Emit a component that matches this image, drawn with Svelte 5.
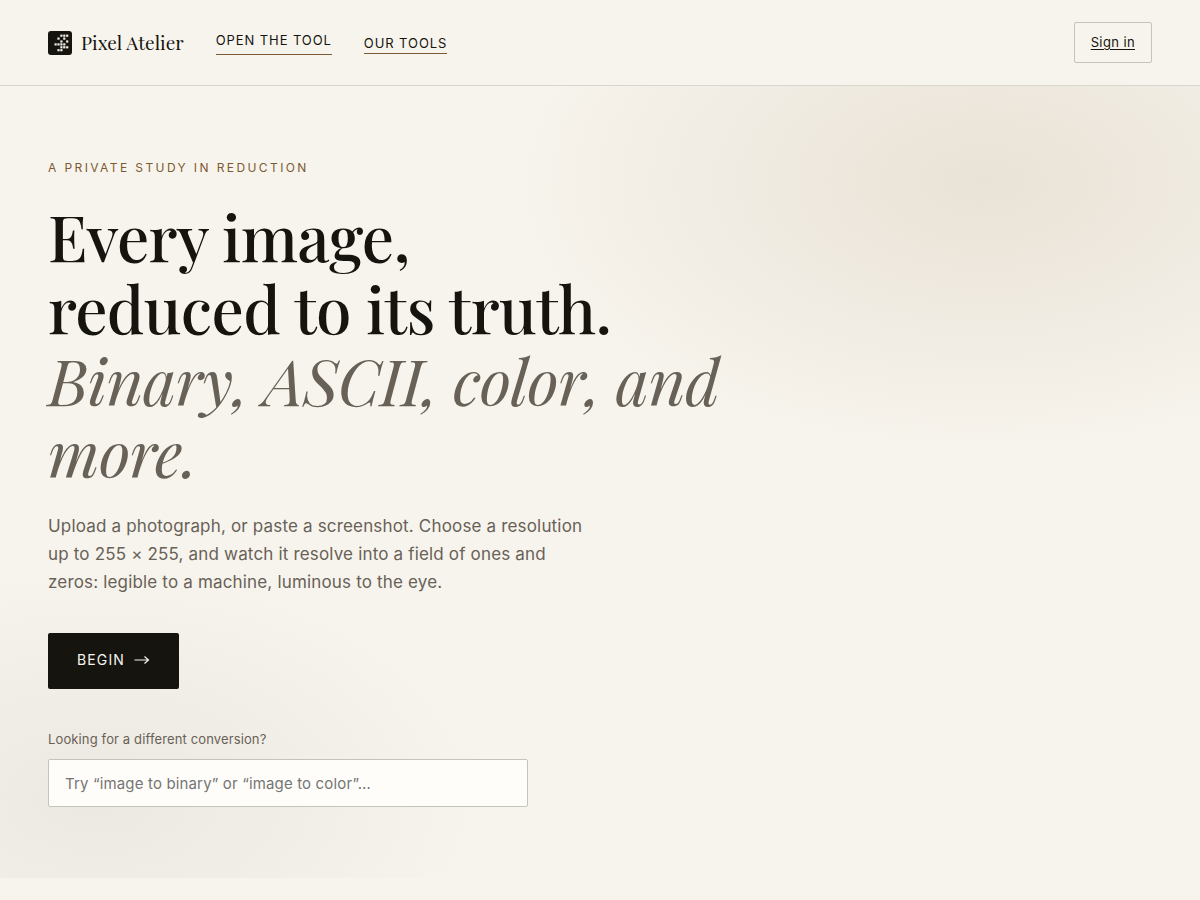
<script>
  let query = $state('');

  const pixels = [
    [5, 2], [6, 2], [7, 2],
    [4, 3], [6, 3],
    [5, 4], [7, 4],
    [3, 5], [4, 5], [5, 5], [6, 5],
    [5, 6], [6, 6], [7, 6],
    [4, 7], [5, 7]
  ];
</script>

<header class="site-header">
  <a class="brand" href="/">
    <svg viewBox="0 0 24 24" aria-hidden="true">
      <rect width="24" height="24" rx="3" fill="#16140f" />
      {#each pixels as [x, y]}
        <rect
          x={x * 2.9 - 2.2}
          y={y * 2.9 - 2.2}
          width="2.2"
          height="2.2"
          fill="#f0eee7"
        />
      {/each}
    </svg>
    <span>Pixel Atelier</span>
  </a>

  <nav aria-label="Main">
    <a class="nav-tool" href="/tool">Open the tool</a>
    <a class="nav-link" href="/tools">Our tools</a>
  </nav>

  <a class="sign-in" href="/login">Sign in</a>
</header>

<main class="hero">
  <p class="eyebrow">A private study in reduction</p>

  <h1>
    Every image,<br />
    reduced to its truth.<br />
    <em>Binary, ASCII, color, and more.</em>
  </h1>

  <p class="lede">
    Upload a photograph, or paste a screenshot. Choose a resolution up to
    255 × 255, and watch it resolve into a field of ones and zeros: legible to
    a machine, luminous to the eye.
  </p>

  <a class="begin" href="/tool">
    Begin
    <svg viewBox="0 0 16 12" aria-hidden="true">
      <path d="M0.5 6h14M10.5 2.5l4 3.5-4 3.5" />
    </svg>
  </a>

  <div class="search">
    <label for="search">Looking for a different conversion?</label>
    <input
      id="search"
      type="text"
      placeholder="Try “image to binary” or “image to color”…"
      bind:value={query}
    />
  </div>
</main>

<style>
  :global(body) {
    background: #f7f4ed;
    color: #16140f;
    font-family: Inter, sans-serif;
  }

  .site-header {
    display: flex;
    align-items: center;
    gap: 32px;
    padding: 22px 48px;
    border-bottom: 1px solid #d9d6cf;
  }

  a {
    color: inherit;
    text-decoration: none;
  }

  .brand {
    display: flex;
    align-items: center;
    gap: 9px;
    font-family: 'Playfair Display', 'Liberation Serif', serif;
    font-size: 19px;
    line-height: 22px;
  }

  .brand span {
    padding-bottom: 2px;
  }

  .brand svg {
    width: 24px;
    height: 24px;
  }

  nav {
    display: flex;
    align-items: center;
    gap: 32px;
    font-size: 13px;
    letter-spacing: 0.07em;
    line-height: 16px;
    text-transform: uppercase;
  }

  nav a {
    border-bottom: 1px solid #7d5a32;
  }

  .nav-tool {
    padding: 2px 0 6px;
  }

  .nav-link {
    padding: 4px 0 2px;
  }

  .sign-in {
    margin-left: auto;
    padding: 11px 16px;
    border: 1px solid #c6c3bc;
    border-radius: 2px;
    font-size: 13px;
    line-height: 17px;
    letter-spacing: 0.03em;
    text-decoration: underline;
    text-underline-offset: 2px;
  }

  .hero {
    box-sizing: border-box;
    min-height: 88vh;
    padding: 72px 48px 71px;
    background:
      radial-gradient(ellipse 480px 275px at 82% 12%, rgba(139, 104, 60, 0.13), transparent),
      radial-gradient(ellipse 400px 240px at 8% 90%, rgba(22, 20, 15, 0.05), transparent);
  }

  .eyebrow {
    margin: 0 0 22px;
    color: #7d5a32;
    font-size: 12px;
    line-height: 20px;
    letter-spacing: 0.2em;
    text-transform: uppercase;
  }

  h1 {
    max-width: 720px;
    margin: 0 0 24px;
    font-family: 'Playfair Display', 'Liberation Serif', serif;
    font-size: 64px;
    font-weight: 500;
    line-height: 72px;
    letter-spacing: -0.01em;
  }

  h1 em {
    color: #686157;
    font-weight: 400;
  }

  .lede {
    max-width: 544px;
    margin: 0 0 37px;
    color: #686157;
    font-size: 17px;
    line-height: 28px;
    letter-spacing: 0.01em;
  }

  .begin {
    display: inline-flex;
    align-items: center;
    gap: 9px;
    padding: 15px 29px 17px;
    border-radius: 2px;
    background: #16140f;
    color: #f7f4ed;
    font-size: 14px;
    line-height: 24px;
    letter-spacing: 0.08em;
    text-transform: uppercase;
  }

  .begin svg {
    width: 16px;
    height: 12px;
    fill: none;
    stroke: currentColor;
    stroke-width: 1.2;
  }

  .search {
    display: grid;
    gap: 10px;
    max-width: 480px;
    margin-top: 40px;
  }

  .search label {
    color: #686157;
    font-size: 13px;
    line-height: 20px;
    letter-spacing: 0.01em;
  }

  .search input {
    box-sizing: border-box;
    width: 100%;
    padding: 12px 16px 10px;
    border: 1px solid #c6c3bc;
    border-radius: 2px;
    background: #fffdf9;
    color: #16140f;
    font-family: inherit;
    font-size: 15px;
    line-height: 24px;
    letter-spacing: 0.01em;
  }

  .search input::placeholder {
    color: #757575;
  }

  @media (max-width: 700px) {
    .site-header {
      flex-wrap: wrap;
      padding: 20px 24px;
    }

    .hero {
      padding: 48px 24px;
    }

    h1 {
      font-size: 40px;
      line-height: 44px;
    }
  }
</style>
